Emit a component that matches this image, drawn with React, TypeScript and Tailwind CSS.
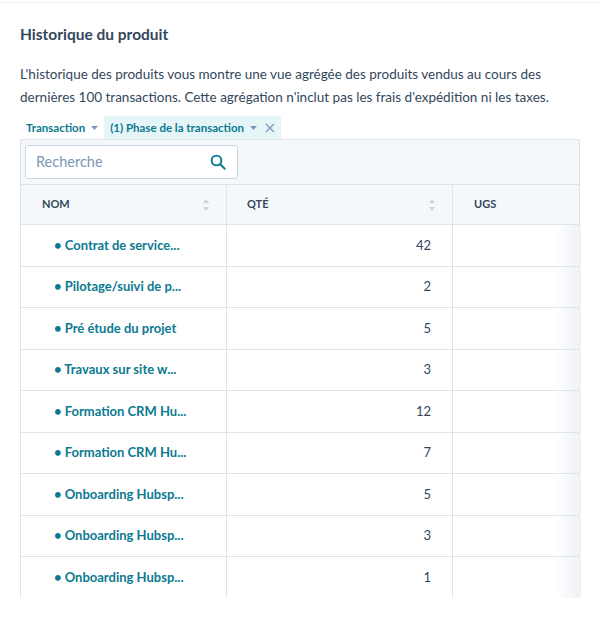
import React from 'react';

const rows: [string, number][] = [
  ['Contrat de service...', 42],
  ['Pilotage/suivi de p...', 2],
  ['Pré étude du projet', 5],
  ['Travaux sur site w...', 3],
  ['Formation CRM Hu...', 12],
  ['Formation CRM Hu...', 7],
  ['Onboarding Hubsp...', 5],
  ['Onboarding Hubsp...', 3],
  ['Onboarding Hubsp...', 1],
];

function SortIcon() {
  return (
    <svg width="8" height="14" viewBox="0 0 8 14" className="text-[#cbd6e2]">
      <path d="M4 1 L7 5 H1 Z" fill="currentColor" />
      <path d="M4 13 L7 9 H1 Z" fill="currentColor" />
    </svg>
  );
}

function Caret() {
  return (
    <svg width="7" height="4" viewBox="0 0 7 4" className="text-[#7c98b6] ml-1.5">
      <path d="M0 0 H7 L3.5 4 Z" fill="currentColor" />
    </svg>
  );
}

export default function App() {
  return (
    <div className="w-[600px] h-[623px] bg-white text-[#33475b] font-[Lato,sans-serif] overflow-hidden">
      <div className="border-t border-[#eaf0f6] mt-[2px] px-5 pt-[20px]">
        <h2 className="text-[15.5px] font-bold leading-[22px]">Historique du produit</h2>
        <p className="mt-[18px] text-[13.5px] leading-[23px] w-[560px]">
          L'historique des produits vous montre une vue agrégée des produits vendus au cours des dernières 100 transactions. Cette agrégation n'inclut pas les frais d'expédition ni les taxes.
        </p>
        <div className="flex items-center mt-[7px] h-[23px] text-[11.5px] font-bold text-[#0b7a91]">
          <div className="flex items-center px-[6px]">Transaction<Caret /></div>
          <div className="flex items-center h-full px-[6px] bg-[#e5f5f8]">
            (1) Phase de la transaction<Caret />
            <svg width="10" height="10" viewBox="0 0 10 10" className="ml-2 text-[#7c98b6]">
              <path d="M1 1 L9 9 M9 1 L1 9" stroke="currentColor" strokeWidth="1.2" />
            </svg>
          </div>
        </div>
        <div className="border border-[#dfe3eb] w-[560px] border-b-0">
          <div className="bg-[#f5f8fa] h-[44px] flex items-center px-[4px]">
            <div className="w-[213px] h-[34px] bg-white border border-[#cbd6e2] rounded-[3px] flex items-center justify-between px-[10px]">
              <span className="text-[14.5px] text-[#7c98b6]">Recherche</span>
              <svg width="18" height="18" viewBox="0 0 24 24" fill="none" stroke="#0b7a91" strokeWidth="2.6" strokeLinecap="round">
                <circle cx="10" cy="10" r="6.5" />
                <path d="M15 15 L21 21" />
              </svg>
            </div>
          </div>
          <div className="grid grid-cols-[206px_226px_128px] bg-[#f5f8fa] border-t border-[#dfe3eb] h-[40px] text-[11px] font-bold">
            <div className="flex items-center justify-between pl-[21px] pr-[16px] border-r border-[#dfe3eb]">NOM<SortIcon /></div>
            <div className="flex items-center justify-between pl-[20px] pr-[16px] border-r border-[#dfe3eb]">QTÉ<SortIcon /></div>
            <div className="flex items-center pl-[21px]">UGS</div>
          </div>
          {rows.map(([name, qty], i) => (
            <div key={i} className="grid grid-cols-[206px_226px_128px] h-[41.5px] border-t border-[#dfe3eb] text-[13px]">
              <div className="flex items-center pl-[33px] border-r border-[#dfe3eb] font-bold text-[#0b7a91]">• {name}</div>
              <div className="flex items-center justify-end pr-[21px] border-r border-[#dfe3eb]">{qty}</div>
              <div className="bg-gradient-to-r from-white from-[80%] to-[#eef1f5]"></div>
            </div>
          ))}
        </div>
      </div>
    </div>
  );
}
